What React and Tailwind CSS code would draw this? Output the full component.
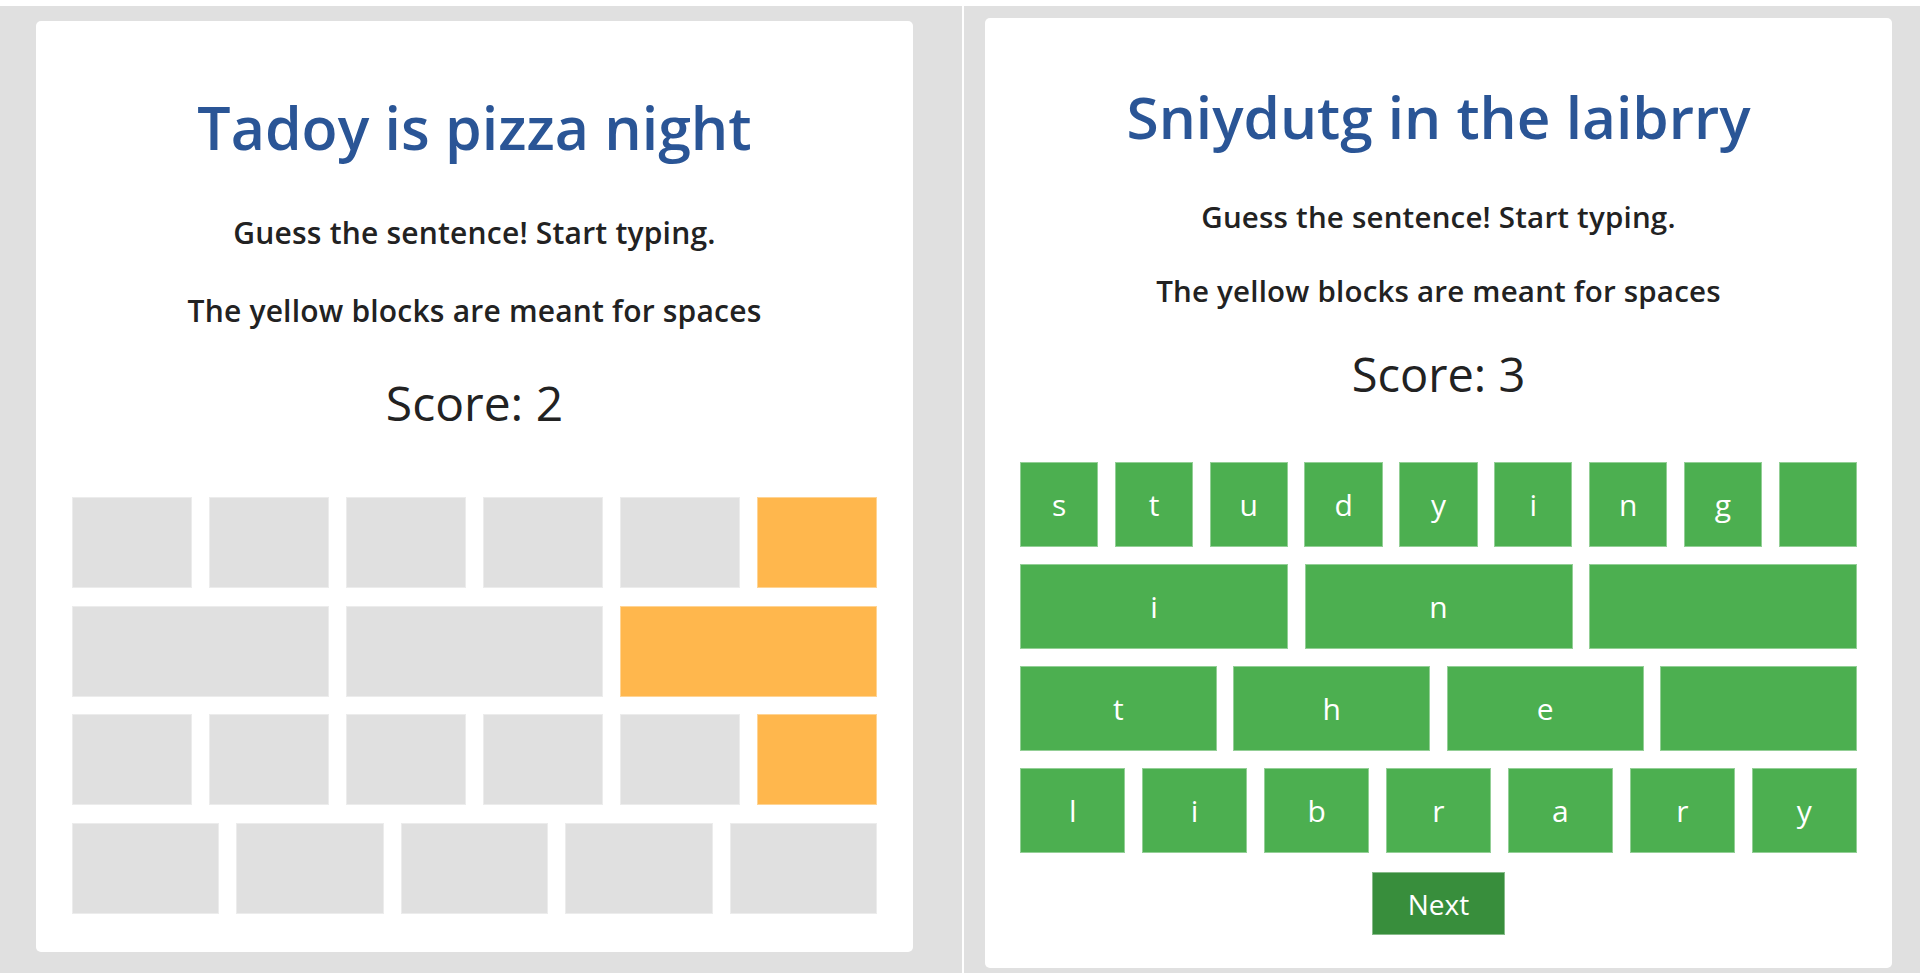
import React from "react";

const font = { fontFamily: '"Open Sans", "Noto Sans", sans-serif' };

function Tile({ kind, letter, h }) {
  const bg =
    kind === "space"
      ? "bg-[#ffb74d]"
      : kind === "green"
      ? "bg-[#4caf50]"
      : "bg-[#e0e0e0]";
  return (
    <div
      className={`flex-1 ${h} ${bg} border border-white/40 flex items-center justify-center text-white text-[30px] leading-none`}
    >
      {letter}
    </div>
  );
}

function LeftCard() {
  const rows = [
    ["g", "g", "g", "g", "g", "s"],
    ["g", "g", "s"],
    ["g", "g", "g", "g", "g", "s"],
    ["g", "g", "g", "g", "g"],
  ];
  return (
    <div className="w-[877px] h-[931px] bg-white rounded-[5px] px-[36px] pt-[70px] flex flex-col items-stretch">
      <h1 className="text-center text-[59px] leading-[72px] font-semibold text-[#2a5596]">
        Tadoy is pizza night
      </h1>
      <p className="mt-[49px] text-center text-[30px] leading-[42px] font-semibold tracking-[0.2px] text-[#222]">
        Guess the sentence! Start typing.
      </p>
      <p className="mt-[36px] text-center text-[30px] leading-[42px] font-semibold tracking-[0.2px] text-[#222]">
        The yellow blocks are meant for spaces
      </p>
      <p className="mt-[42px] text-center text-[48px] leading-[58px] font-normal text-[#222]">
        Score: 2
      </p>
      <div className="mt-[65px] flex flex-col gap-[17.7px]">
        {rows.map((r, i) => (
          <div key={i} className="flex gap-[17px]">
            {r.map((k, j) => (
              <Tile key={j} kind={k === "s" ? "space" : "gray"} h="h-[91px]" />
            ))}
          </div>
        ))}
      </div>
    </div>
  );
}

function RightCard() {
  const rows = [
    ["s", "t", "u", "d", "y", "i", "n", "g", ""],
    ["i", "n", ""],
    ["t", "h", "e", ""],
    ["l", "i", "b", "r", "a", "r", "y"],
  ];
  return (
    <div className="w-[907px] h-[950px] bg-white rounded-[5px] px-[35px] pt-[62px] flex flex-col items-stretch">
      <h1 className="text-center text-[58.5px] leading-[72px] font-semibold text-[#2a5596]">
        Sniydutg in the laibrry
      </h1>
      <p className="mt-[44px] text-center text-[29.5px] leading-[42px] font-semibold tracking-[0.2px] text-[#222]">
        Guess the sentence! Start typing.
      </p>
      <p className="mt-[32px] text-center text-[29.5px] leading-[42px] font-semibold tracking-[0.2px] text-[#222]">
        The yellow blocks are meant for spaces
      </p>
      <p className="mt-[34px] text-center text-[47px] leading-[56px] font-normal text-[#222]">
        Score: 3
      </p>
      <div className="mt-[60px] flex flex-col gap-[17px]">
        {rows.map((r, i) => (
          <div key={i} className="flex gap-[16.5px]">
            {r.map((l, j) => (
              <Tile key={j} kind="green" letter={l} h="h-[85px]" />
            ))}
          </div>
        ))}
      </div>
      <div className="mt-[19px] flex justify-center">
        <button className="w-[133px] h-[63px] bg-[#388e3c] border border-white/40 text-white text-[28px] leading-none">
          Next
        </button>
      </div>
    </div>
  );
}

export default function App() {
  return (
    <div style={font} className="w-[1920px] h-[973px] bg-white pt-[6px] flex gap-[2px] overflow-hidden">
      <div className="w-[962px] h-full bg-[#e0e0e0] pl-[36px] pt-[15px]">
        <LeftCard />
      </div>
      <div className="flex-1 h-full bg-[#e0e0e0] pl-[21px] pt-[12px]">
        <RightCard />
      </div>
    </div>
  );
}
